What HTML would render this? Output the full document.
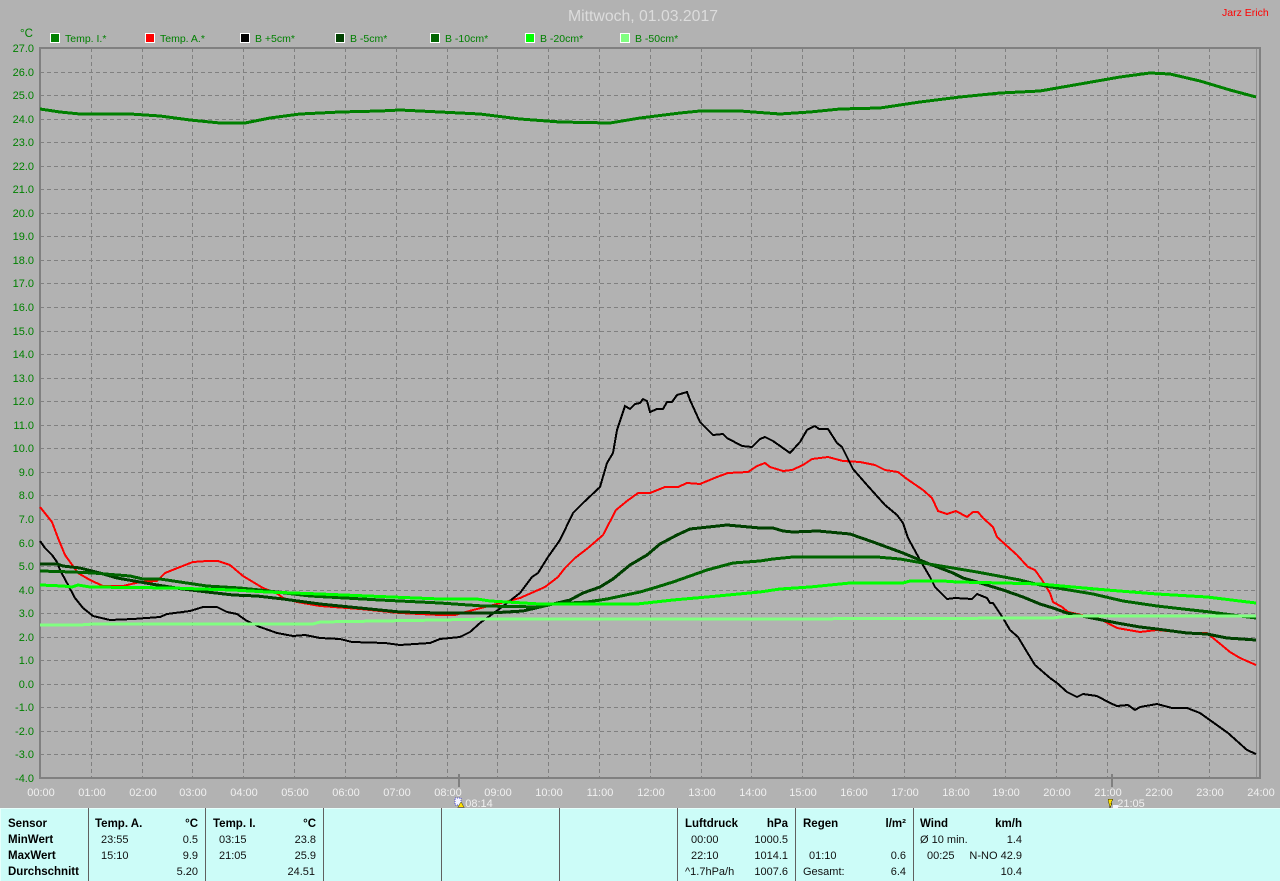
<!DOCTYPE html>
<html lang="de"><head><meta charset="utf-8"><title>Mittwoch, 01.03.2017</title>
<style>
html,body{margin:0;padding:0;background:#b2b2b2;width:1280px;height:881px;overflow:hidden}
svg{display:block;font-family:"Liberation Sans",sans-serif}
.c{fill:none;stroke-linejoin:miter;shape-rendering:crispEdges}
.y text{fill:#008000;font-size:11px;text-anchor:end}
.x text{fill:#f0f0f0;font-size:11px;text-anchor:middle}
.l text{fill:#008000;font-size:10.5px}
.l rect{stroke:#fff;stroke-width:1;shape-rendering:crispEdges}
.p text{fill:#111;font-size:11px}
.p .b{font-weight:bold;font-size:11.5px;fill:#000}
.p .r{text-anchor:end}
</style></head><body>
<svg width="1280" height="881" viewBox="0 0 1280 881" xmlns="http://www.w3.org/2000/svg">
<rect width="1280" height="881" fill="#b2b2b2"/>
<text x="568" y="21" font-size="15.5" fill="#dcdcdc" textLength="150" lengthAdjust="spacingAndGlyphs">Mittwoch, 01.03.2017</text>
<text x="1222" y="16" font-size="10.5" fill="#ff0000">Jarz Erich</text>
<text x="20" y="37" font-size="11.5" fill="#008000">°C</text>

<g class="l">
<rect x="50.5" y="33.5" width="9" height="9" fill="#008000"/><text x="65" y="42">Temp. I.*</text>
<rect x="145.5" y="33.5" width="9" height="9" fill="#ff0000"/><text x="160" y="42">Temp. A.*</text>
<rect x="240.5" y="33.5" width="9" height="9" fill="#000000"/><text x="255" y="42">B +5cm*</text>
<rect x="335.5" y="33.5" width="9" height="9" fill="#004000"/><text x="350" y="42">B -5cm*</text>
<rect x="430.5" y="33.5" width="9" height="9" fill="#006400"/><text x="445" y="42">B -10cm*</text>
<rect x="525.5" y="33.5" width="9" height="9" fill="#00ff00"/><text x="540" y="42">B -20cm*</text>
<rect x="620.5" y="33.5" width="9" height="9" fill="#80ff80"/><text x="635" y="42">B -50cm*</text>
</g>

<path d="M40 72.5H1256M40 95.5H1256M40 119.5H1256M40 142.5H1256M40 166.5H1256M40 189.5H1256M40 213.5H1256M40 236.5H1256M40 260.5H1256M40 283.5H1256M40 307.5H1256M40 331.5H1256M40 354.5H1256M40 378.5H1256M40 401.5H1256M40 425.5H1256M40 448.5H1256M40 472.5H1256M40 495.5H1256M40 519.5H1256M40 543.5H1256M40 566.5H1256M40 590.5H1256M40 613.5H1256M40 637.5H1256M40 660.5H1256M40 684.5H1256M40 707.5H1256M40 731.5H1256M40 754.5H1256" stroke="#808080" stroke-width="1" stroke-dasharray="4 3" fill="none" shape-rendering="crispEdges"/>
<path d="M91.5 48V778M142.5 48V778M192.5 48V778M243.5 48V778M294.5 48V778M345.5 48V778M396.5 48V778M447.5 48V778M497.5 48V778M548.5 48V778M599.5 48V778M650.5 48V778M701.5 48V778M751.5 48V778M802.5 48V778M853.5 48V778M904.5 48V778M955.5 48V778M1005.5 48V778M1056.5 48V778M1107.5 48V778M1158.5 48V778M1209.5 48V778" stroke="#808080" stroke-width="1" stroke-dasharray="4 3" fill="none" shape-rendering="crispEdges"/>

<g shape-rendering="crispEdges">
<rect x="39" y="47" width="2" height="732" fill="#808080"/>
<rect x="39" y="47" width="1222" height="2" fill="#808080"/>
<rect x="39" y="777" width="1222" height="2" fill="#808080"/>
<rect x="1259" y="47" width="2" height="732" fill="#808080"/>
<rect x="1256" y="49" width="1" height="728" fill="#909090"/>
<rect x="458" y="774" width="2" height="13" fill="#808080"/>
<rect x="1111" y="774" width="2" height="13" fill="#808080"/>
</g>

<polyline class="c" stroke="#008000" stroke-width="3" points="40,109 60,112 80,114 130,114 160,116 190,120 220,123 245,123 270,118 300,114 340,112 380,111 400,110 440,112 480,114 520,119 560,122 610,123 640,118 680,113 700,111 740,111 780,114 810,112 840,109 880,108 920,102 960,97 1000,93 1040,91 1080,84 1120,77 1150,73 1170,74 1200,81 1230,90 1256,97"/>
<polyline class="c" stroke="#ff0000" stroke-width="2" points="40,507 52,522 58,538 65,555 78,573 90,580 103,586 123,586 140,582 157,581 165,573 180,567 193,562 207,561 218,561 230,565 243,576 263,588 278,594 283,598 297,602 320,606 360,609 400,613 440,615 455,615 473,610 497,604 520,598 545,587 558,577 565,568 575,558 588,548 603,535 616,510 627,501 638,493 650,493 665,487 678,487 687,483 700,484 717,477 728,473 748,472 757,466 765,463 770,467 783,471 792,470 803,465 812,459 828,457 843,461 860,462 875,465 885,470 898,472 907,479 923,490 932,498 938,511 947,514 956,511 967,517 973,512 978,512 983,518 993,527 997,537 1017,555 1028,567 1035,570 1042,580 1050,593 1053,602 1062,607 1068,612 1100,619 1117,628 1140,632 1157,630 1187,633 1207,633 1230,652 1240,658 1256,665"/>
<polyline class="c" stroke="#000000" stroke-width="2" points="40,541 45,548 52,555 57,562 60,570 67,583 75,598 83,608 93,616 110,620 133,619 160,617 167,614 190,611 203,607 217,607 227,612 237,614 247,621 260,627 277,633 293,636 305,635 320,638 340,639 352,642 385,643 400,645 430,643 440,639 460,637 470,632 480,623 498,610 520,593 532,577 538,573 548,557 560,540 573,513 583,503 600,487 607,463 613,453 617,430 625,406 630,409 635,404 640,403 643,399 647,401 650,412 657,409 663,409 667,402 672,402 677,395 687,392 690,400 700,422 713,435 723,434 727,438 742,446 752,447 760,439 765,437 773,441 790,453 800,442 807,430 815,426 819,429 828,429 837,443 842,447 853,469 867,485 885,505 897,515 903,523 908,538 920,560 930,577 935,587 947,599 955,598 972,599 977,594 987,598 990,603 993,603 1003,618 1010,630 1018,637 1027,652 1035,665 1050,678 1057,683 1067,692 1077,697 1083,694 1097,696 1110,703 1117,706 1128,705 1135,710 1140,707 1157,704 1172,708 1187,708 1200,713 1207,718 1228,733 1247,750 1256,754"/>
<polyline class="c" stroke="#004000" stroke-width="3" points="40,564 57,564 63,566 80,568 100,573 117,578 140,582 157,585 183,589 207,592 233,595 257,596 283,599 320,604 370,609 400,612 440,613 490,613 523,611 553,604 570,600 583,593 600,587 613,579 630,565 647,555 660,544 677,535 690,529 727,525 760,528 773,528 783,531 793,532 818,531 850,534 873,542 903,553 927,563 953,573 963,578 977,582 1003,590 1023,597 1040,604 1053,608 1067,613 1087,617 1117,623 1140,627 1157,629 1187,633 1207,634 1227,638 1256,640"/>
<polyline class="c" stroke="#006400" stroke-width="3" points="40,571 73,572 93,573 130,576 143,579 160,579 180,582 207,586 240,588 260,590 310,596 380,600 440,603 483,606 540,607 553,604 587,602 607,599 640,592 657,587 673,582 707,570 733,563 760,561 773,559 793,557 877,557 900,559 917,562 947,567 977,572 1020,580 1040,585 1063,589 1093,594 1123,601 1157,606 1183,609 1210,612 1240,616 1256,618"/>
<polyline class="c" stroke="#00ff00" stroke-width="3" points="40,585 63,586 72,587 78,585 90,587 173,588 200,589 233,590 267,592 320,594 440,599 477,599 490,601 540,604 637,604 673,600 707,597 760,592 780,589 810,587 830,585 850,583 903,583 910,581 943,581 957,582 1003,583 1040,584 1073,587 1107,590 1157,594 1207,597 1256,603"/>
<polyline class="c" stroke="#80ff80" stroke-width="3" points="40,625 80,625 93,624 313,624 320,622 440,620 487,619 760,619 1053,618 1060,617 1077,616 1256,616"/>

<g class="y">
<text x="34" y="52">27.0</text><text x="34" y="76">26.0</text><text x="34" y="99">25.0</text><text x="34" y="123">24.0</text><text x="34" y="146">23.0</text><text x="34" y="170">22.0</text><text x="34" y="193">21.0</text><text x="34" y="217">20.0</text><text x="34" y="240">19.0</text><text x="34" y="264">18.0</text><text x="34" y="287">17.0</text><text x="34" y="311">16.0</text><text x="34" y="335">15.0</text><text x="34" y="358">14.0</text><text x="34" y="382">13.0</text><text x="34" y="405">12.0</text><text x="34" y="429">11.0</text><text x="34" y="452">10.0</text><text x="34" y="476">9.0</text><text x="34" y="499">8.0</text><text x="34" y="523">7.0</text><text x="34" y="547">6.0</text><text x="34" y="570">5.0</text><text x="34" y="594">4.0</text><text x="34" y="617">3.0</text><text x="34" y="641">2.0</text><text x="34" y="664">1.0</text><text x="34" y="688">0.0</text><text x="34" y="711">-1.0</text><text x="34" y="735">-2.0</text><text x="34" y="758">-3.0</text><text x="34" y="782">-4.0</text>
</g>
<g class="x">
<text x="41" y="796">00:00</text><text x="92" y="796">01:00</text><text x="143" y="796">02:00</text><text x="193" y="796">03:00</text><text x="244" y="796">04:00</text><text x="295" y="796">05:00</text><text x="346" y="796">06:00</text><text x="397" y="796">07:00</text><text x="448" y="796">08:00</text><text x="498" y="796">09:00</text><text x="549" y="796">10:00</text><text x="600" y="796">11:00</text><text x="651" y="796">12:00</text><text x="702" y="796">13:00</text><text x="753" y="796">14:00</text><text x="803" y="796">15:00</text><text x="854" y="796">16:00</text><text x="905" y="796">17:00</text><text x="956" y="796">18:00</text><text x="1006" y="796">19:00</text><text x="1057" y="796">20:00</text><text x="1108" y="796">21:00</text><text x="1159" y="796">22:00</text><text x="1210" y="796">23:00</text><text x="1261" y="796">24:00</text>
<text x="479" y="807">08:14</text><text x="1131" y="807">21:05</text>
</g>
<g shape-rendering="crispEdges">
<rect x="455" y="798" width="6" height="7" fill="#f4f4ff" stroke="#5050d0" stroke-width="1" stroke-dasharray="1 1"/>
<path d="M461 802L464 807L458 807Z" fill="#ffe000" stroke="#303000" stroke-width=".5"/>
<path d="M1108 799H1113L1111 803H1112L1110 808Z" fill="#ffe000" stroke="#303000" stroke-width=".5"/>
<rect x="1113" y="805" width="5" height="3" fill="#f4f4ff"/>
</g>

<rect x="0" y="808" width="1280" height="73" fill="#ccfcf8"/>
<rect x="0" y="808" width="1280" height="1" fill="#e6fffc"/>
<rect x="0" y="808" width="1" height="73" fill="#e6fffc"/>
<path d="M88.5 808V881M205.5 808V881M323.5 808V881M441.5 808V881M559.5 808V881M677.5 808V881M795.5 808V881M913.5 808V881" stroke="#606060" stroke-width="1" fill="none" shape-rendering="crispEdges"/>
<g class="p">
<text class="b" x="8" y="827">Sensor</text><text class="b" x="8" y="843">MinWert</text><text class="b" x="8" y="859">MaxWert</text><text class="b" x="8" y="875">Durchschnitt</text>
<text class="b" x="95" y="827">Temp. A.</text><text class="b r" x="198" y="827">°C</text>
<text x="101" y="843">23:55</text><text class="r" x="198" y="843">0.5</text>
<text x="101" y="859">15:10</text><text class="r" x="198" y="859">9.9</text>
<text class="r" x="198" y="875">5.20</text>
<text class="b" x="213" y="827">Temp. I.</text><text class="b r" x="316" y="827">°C</text>
<text x="219" y="843">03:15</text><text class="r" x="316" y="843">23.8</text>
<text x="219" y="859">21:05</text><text class="r" x="316" y="859">25.9</text>
<text class="r" x="315" y="875">24.51</text>
<text class="b" x="685" y="827">Luftdruck</text><text class="b r" x="788" y="827">hPa</text>
<text x="691" y="843">00:00</text><text class="r" x="788" y="843">1000.5</text>
<text x="691" y="859">22:10</text><text class="r" x="788" y="859">1014.1</text>
<text x="685" y="875">^1.7hPa/h</text><text class="r" x="788" y="875">1007.6</text>
<text class="b" x="803" y="827">Regen</text><text class="b r" x="906" y="827">l/m²</text>
<text x="809" y="859">01:10</text><text class="r" x="906" y="859">0.6</text>
<text x="803" y="875">Gesamt:</text><text class="r" x="906" y="875">6.4</text>
<text class="b" x="920" y="827">Wind</text><text class="b r" x="1022" y="827">km/h</text>
<text x="920" y="843">Ø 10 min.</text><text class="r" x="1022" y="843">1.4</text>
<text x="927" y="859">00:25</text><text class="r" x="1022" y="859">N-NO 42.9</text>
<text class="r" x="1022" y="875">10.4</text>
</g>
</svg>
</body></html>
